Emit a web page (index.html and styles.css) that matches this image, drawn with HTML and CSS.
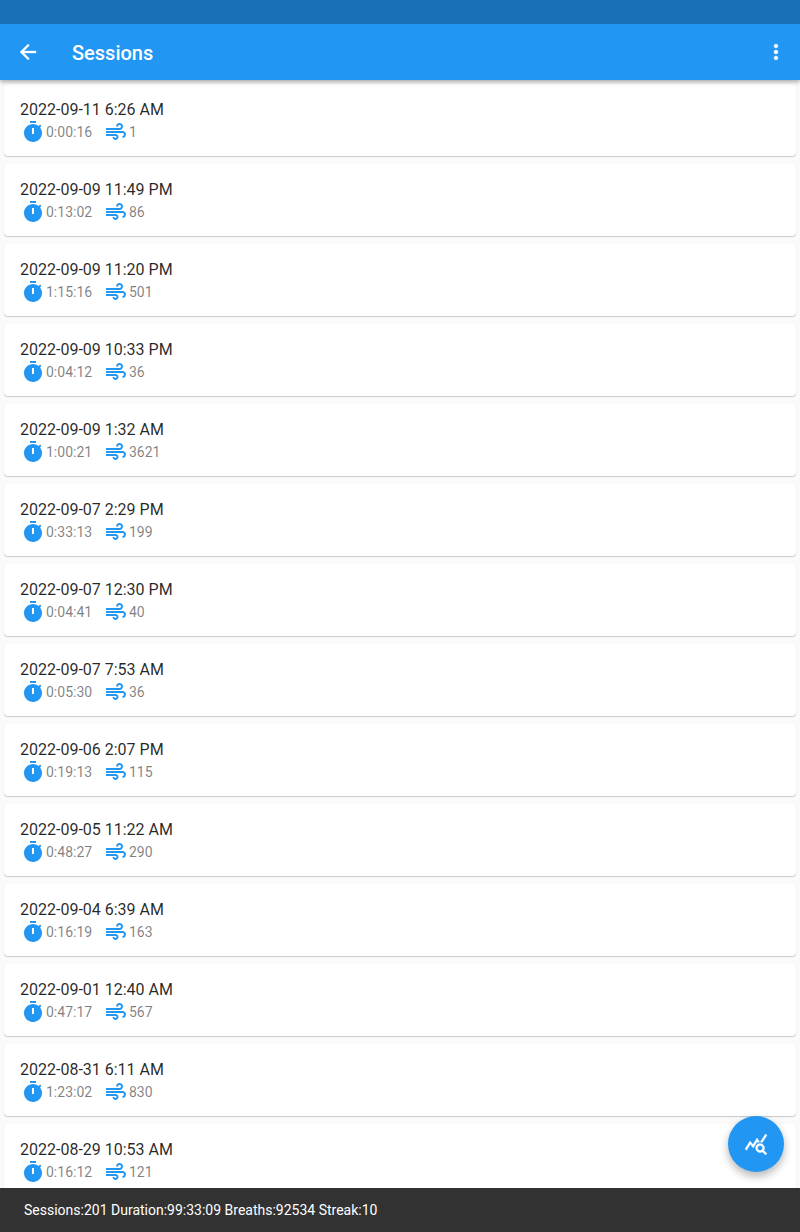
FILE: index.html
```html
<!DOCTYPE html>
<html lang="en">
<head>
<meta charset="utf-8">
<title>Sessions</title>
<link rel="stylesheet" href="styles.css">
</head>
<body>
<svg class="defs" aria-hidden="true">
  <symbol id="timer" viewBox="0 0 24 24"><path d="M9 1h6v2H9zM19.03 7.39l1.42-1.42c-.43-.51-.9-.99-1.41-1.41l-1.42 1.42C16.07 4.74 14.12 4 12 4c-4.97 0-9 4.03-9 9s4.02 9 9 9 9-4.03 9-9c0-2.12-.74-4.07-1.97-5.61zM13 14h-2V8h2v6z"/></symbol>
  <symbol id="air" viewBox="0 0 24 24"><path d="M14.5 17c0 1.65-1.35 3-3 3s-3-1.35-3-3h2c0 .55.45 1 1 1s1-.45 1-1-.45-1-1-1H2v-2h9.5c1.65 0 3 1.35 3 3zM19 6.5C19 4.57 17.43 3 15.5 3S12 4.57 12 6.5h2c0-.83.67-1.5 1.5-1.5s1.5.67 1.5 1.5S16.33 8 15.5 8H2v2h13.5c1.93 0 3.5-1.57 3.5-3.5zM18.5 11H2v2h16.5c.83 0 1.5.67 1.5 1.5s-.67 1.5-1.5 1.5v2c1.93 0 3.5-1.57 3.5-3.5S20.43 11 18.5 11z"/></symbol>
</svg>
<div class="app">
  <div class="status-bar"></div>
  <header class="app-bar">
    <svg class="icon bold" viewBox="0 0 24 24"><path d="M20 11H7.83l5.59-5.59L12 4l-8 8 8 8 1.41-1.41L7.83 13H20v-2z"/></svg>
    <h1 class="title">Sessions</h1>
    <svg class="icon bold" viewBox="0 0 24 24"><path d="M12 8c1.1 0 2-.9 2-2s-.9-2-2-2-2 .9-2 2 .9 2 2 2zm0 2c-1.1 0-2 .9-2 2s.9 2 2 2 2-.9 2-2-.9-2-2-2zm0 6c-1.1 0-2 .9-2 2s.9 2 2 2 2-.9 2-2-.9-2-2-2z"/></svg>
  </header>
  <main class="list" id="list"></main>
  <button class="fab" aria-label="Statistics">
    <svg class="icon bold" viewBox="0 0 24 24"><path d="M19.88 18.47c.44-.7.7-1.51.7-2.39 0-2.49-2.01-4.5-4.5-4.5s-4.5 2.01-4.5 4.5 2.01 4.5 4.49 4.5c.88 0 1.7-.26 2.39-.7L21.58 23 23 21.58l-3.12-3.11zm-3.8.11c-1.38 0-2.5-1.12-2.5-2.5s1.12-2.5 2.5-2.5 2.5 1.12 2.5 2.5-1.12 2.5-2.5 2.5zM15.72 10.08c-.74.02-1.45.18-2.1.45l-.55-.83-3.8 6.18-3.01-3.52-3.63 5.81L1 17l5-8 3 3.5L13 6l2.72 4.08zM18.31 10.58c-.64-.28-1.33-.45-2.05-.49L21.38 2 23 3.18l-4.69 7.4z"/></svg>
  </button>
  <footer class="summary">Sessions:201 Duration:99:33:09 Breaths:92534 Streak:10</footer>
</div>
<script src="script.js"></script>
</body>
</html>
```
FILE: styles.css
```css
* { box-sizing: border-box; }

body {
  margin: 0;
  font-family: Roboto, "Liberation Sans", sans-serif;
  background: #fafafa;
}

.defs { display: none; }

.app {
  position: relative;
  display: flex;
  flex-direction: column;
  height: 1232px;
  overflow: hidden;
}

.status-bar { flex: none; height: 24px; background: #1a70b7; position: relative; z-index: 2; }

.app-bar {
  position: relative;
  z-index: 1;
  flex: none;
  display: flex;
  align-items: center;
  height: 56px;
  padding: 0 12px 0 16px;
  background: #2196f3;
  color: #fff;
  box-shadow: 0 2px 4px rgba(0,0,0,.28), 0 1px 7px rgba(0,0,0,.08);
}

.icon { width: 24px; height: 24px; flex: none; fill: currentColor; display: block; }
.icon.bold { stroke: currentColor; stroke-width: .35; }

.title {
  flex: 1;
  margin: 0 0 0 32px;
  font-size: 20px;
  font-weight: 500;
  line-height: 24px;
  padding-top: 1px;
}

.list { flex: 1; min-height: 0; overflow: hidden; }

.card {
  height: 72px;
  margin: 4px 4px 8px;
  padding: 16px 16px 0;
  border-radius: 4px;
  background: #fff;
  box-shadow: 0 1px 1px rgba(0,0,0,.2), 0 0 1px rgba(0,0,0,.06);
}

.card + .card { margin-top: 8px; }

.date { font-size: 16px; line-height: 20px; color: rgba(0,0,0,.85); }

.stats {
  display: flex;
  align-items: center;
  height: 24px;
  padding-left: 1px;
  font-size: 14px;
  color: rgba(0,0,0,.5);
}

.stats .icon { color: #2196f3; }
.duration { width: 59px; padding-left: 1px; }
.breaths { padding-left: 1px; }

.fab {
  position: absolute;
  right: 16px;
  bottom: 60px;
  display: grid;
  place-items: center;
  width: 56px;
  height: 56px;
  padding: 0;
  border: 0;
  border-radius: 50%;
  background: #2196f3;
  color: #fff;
  box-shadow: 0 5px 9px rgba(0,0,0,.24), 0 1px 8px rgba(0,0,0,.07);
}

.summary {
  position: relative;
  flex: none;
  height: 44px;
  padding-left: 24px;
  background: #323232;
  color: #fff;
  font-size: 14px;
  line-height: 44px;
}
```
FILE: script.js
```js
const sessions = [
  ["2022-09-11 6:26 AM", "0:00:16", 1],
  ["2022-09-09 11:49 PM", "0:13:02", 86],
  ["2022-09-09 11:20 PM", "1:15:16", 501],
  ["2022-09-09 10:33 PM", "0:04:12", 36],
  ["2022-09-09 1:32 AM", "1:00:21", 3621],
  ["2022-09-07 2:29 PM", "0:33:13", 199],
  ["2022-09-07 12:30 PM", "0:04:41", 40],
  ["2022-09-07 7:53 AM", "0:05:30", 36],
  ["2022-09-06 2:07 PM", "0:19:13", 115],
  ["2022-09-05 11:22 AM", "0:48:27", 290],
  ["2022-09-04 6:39 AM", "0:16:19", 163],
  ["2022-09-01 12:40 AM", "0:47:17", 567],
  ["2022-08-31 6:11 AM", "1:23:02", 830],
  ["2022-08-29 10:53 AM", "0:16:12", 121]
];

document.getElementById("list").innerHTML = sessions.map(([date, duration, breaths]) => `
  <article class="card">
    <div class="date">${date}</div>
    <div class="stats">
      <svg class="icon"><use href="#timer"/></svg>
      <span class="duration">${duration}</span>
      <svg class="icon"><use href="#air"/></svg>
      <span class="breaths">${breaths}</span>
    </div>
  </article>`).join("");
```
